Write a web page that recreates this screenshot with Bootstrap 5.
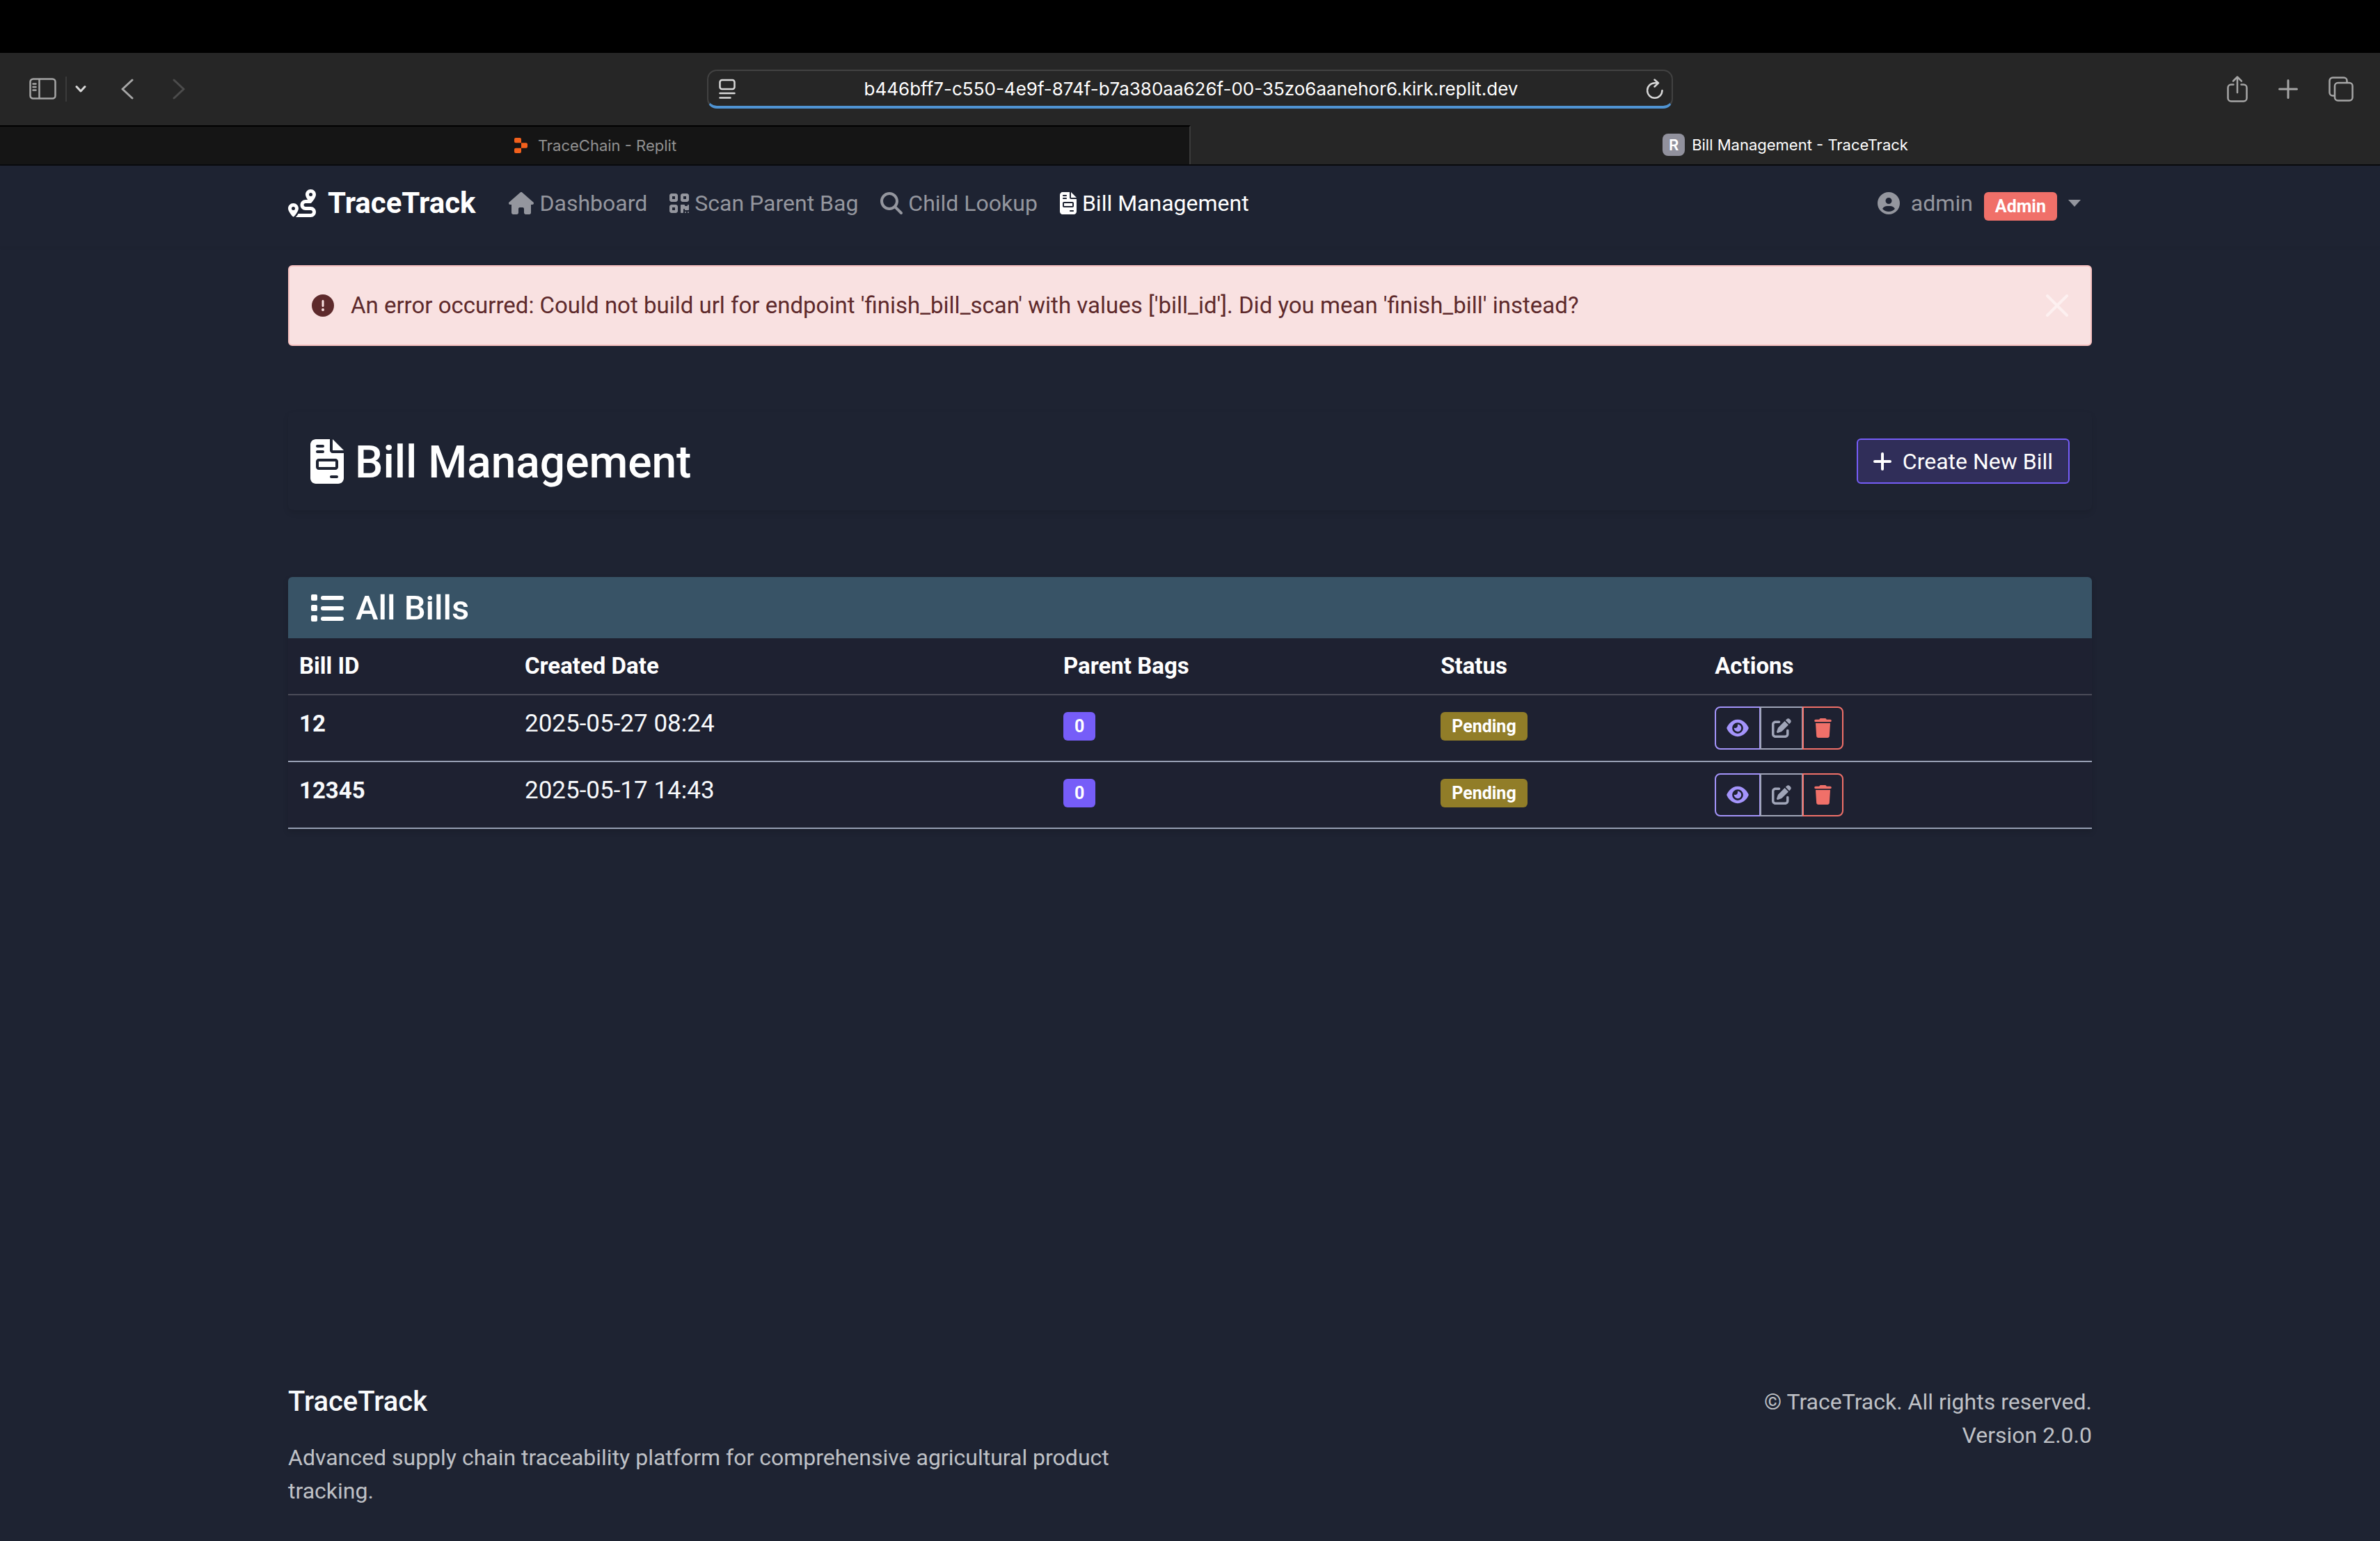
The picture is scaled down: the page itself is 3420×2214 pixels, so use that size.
<!DOCTYPE html>
<html lang="en" data-bs-theme="dark">
<head>
<meta charset="utf-8">
<meta name="viewport" content="width=device-width, initial-scale=1">
<title>Bill Management - TraceTrack</title>
<link href="https://cdn.jsdelivr.net/npm/bootstrap@5.3.0/dist/css/bootstrap.min.css" rel="stylesheet">
<style>
  body {
    font-family: Roboto, "Liberation Sans", sans-serif;
    font-size: 32px;
    line-height: 48px;
    color: #f8fafc;
    background: #1e2332;
  }
  svg { display: block; flex: none; }
  .fa { fill: currentColor; }
  .ln { fill: none; stroke: currentColor; stroke-linecap: round; stroke-linejoin: round; }
  h1, h2, h3, p { margin: 0; }

  /* Browser window */
  .chrome { font-family: Inter, "Liberation Sans", sans-serif; }
  .top-strip { height: 76px; background: #000; }
  .tool-row {
    display: grid;
    grid-template-columns: minmax(0, 1fr) minmax(0, 1388px) minmax(0, 1fr);
    align-items: center;
    height: 104px;
    background: #262626;
    color: #a6a6a6;
  }
  .tool-row button { background: none; border: 0; padding: 0; color: inherit; }
  .tool-left { padding-left: 42px; }
  .tool-right { padding-right: 38px; gap: 44px; }
  .tool-sep { width: 2px; height: 36px; background: #3a3a3a; margin: 0 12px; }
  .addr {
    height: 56px;
    border: 2px solid #424242;
    border-bottom: 4px solid #4f93d2;
    border-radius: 14px;
    padding: 2px 12px 0 15px;
    color: #d8d8d8;
  }
  .addr input {
    background: none;
    border: 0;
    outline: 0;
    padding: 0;
    color: #fff;
    font-size: 26px;
    line-height: 40px;
    text-align: center;
  }
  .tab-row { height: 58px; border-bottom: 2px solid #090a0d; background: #262626; }
  .tab-row a {
    flex: 1 1 0;
    font-size: 22px;
    line-height: 32px;
    color: #fff;
    gap: 10px;
  }
  .tab-row a.tab-idle {
    background: #151515;
    color: #929292;
    border-top: 2px solid #000;
    border-right: 2px solid #3b3b3b;
    gap: 14px;
  }
  .fav { width: 32px; height: 32px; border-radius: 8px; background: #91919d; font-weight: 600; }

  /* Page */
  .page-wrap { max-width: 2640px; padding: 0 24px; }
  .main-nav { height: 116px; padding: 0 0 8px; box-shadow: 0 2px 4px rgba(0, 0, 0, .05); }
  .main-nav .navbar-brand { font-size: 42px; font-weight: 700; line-height: 60px; gap: 17px; margin: 0 32px 0 0; padding: 0; color: #fff; }
  .main-nav .nav-link { gap: 8px; padding: 0 16px; font-size: 32px; line-height: 48px; color: #94969e; }
  .main-nav .nav-link.active { color: #fff; }
  .main-nav .user-link { gap: 16px; }
  .main-nav .user-link .tag { margin-top: 8px; }
  .main-nav .dropdown-toggle::after { display: none; }
  .tag { font-size: 25px; font-weight: 700; line-height: 25px; padding: 8px 16px; border-radius: 6px; color: #fff; }
  .tag-red { background: #f07069; }
  .tag-violet { background: #765df8; }
  .tag-olive { background: #917d28; }

  .note {
    margin: 27px 0 0;
    height: 116px;
    padding: 0 32px;
    border: 2px solid #f6c0bf;
    border-radius: 6px;
    background: #f9e1e1;
    color: #5e2a2c;
    font-size: 33px;
  }
  .note .ln { color: #fdf0f0; }
  .note button { background: none; border: 0; padding: 0; }

  .head-box { margin-top: 95px; height: 141px; padding: 0 32px; border-radius: 8px; box-shadow: 0 4px 8px rgba(0, 0, 0, .1); }
  .head-box h1 { font-size: 64px; font-weight: 500; line-height: 76px; gap: 16px; }
  .head-box h1 span { padding-top: 4px; }
  .btn-new {
    height: 65px;
    padding: 0 22px;
    gap: 16px;
    border: 2px solid #765df8;
    border-radius: 6px;
    background: #302e59;
    color: #fff;
    font-size: 32px;
    line-height: 48px;
  }

  .bill-box { margin-top: 96px; border-radius: 6px 6px 0 0; overflow: hidden; box-shadow: 0 4px 8px rgba(0, 0, 0, .15); }
  .bill-head { height: 88px; padding: 0 33px; background: #385366; }
  .bill-head h2 { font-size: 49px; font-weight: 500; line-height: 58px; gap: 17px; padding-top: 2px; }
  .bills { table-layout: fixed; margin: 0; color: #f8fafc; --bs-table-bg: #1e2131; }
  .bills > :not(caption) > * > * { padding: 16px; border-bottom: 2px solid #979fb3; vertical-align: top; line-height: 48px; }
  .bills > thead > tr > th { font-size: 33px; font-weight: 700; border-color: #4b4c59; color: #fff; }
  .bills > tbody > tr > td { font-size: 35px; height: 96px; padding: 17px 16px 0; }
  .bills > tbody > tr > td strong { font-size: 33px; }
  .bills > tbody > tr > td.cell-tag { padding-top: 24px; line-height: 41px; }
  .bills > tbody > tr > td.cell-acts { padding-top: 16px; line-height: 0; }
  .bills .tag { display: block; width: max-content; }
  .acts .btn { height: 62px; padding: 0 15px; border: 2px solid; border-radius: 8px; display: flex; align-items: center; }
  .acts .btn + .btn { margin-left: -1px; }
  .c-violet, .c-violet:hover { color: #a494fb; }
  .c-slate, .c-slate:hover { color: #a0a5b8; }
  .c-red, .c-red:hover { color: #f07069; }

  .foot { padding-bottom: 48px; color: #bfc1c6; }
  .foot h3 { font-size: 40px; font-weight: 500; line-height: 48px; margin-bottom: 32px; color: #f8fafc; }
</style>
</head>
<body class="d-flex flex-column min-vh-100">

<svg width="0" height="0" class="position-absolute" aria-hidden="true">
  <symbol id="i-file" viewBox="0 0 384 512"><path d="M64 0C28.700 0 0 28.700 0 64L0 448c0 35.300 28.700 64 64 64l256 0c35.300 0 64-28.700 64-64l0-288-128 0c-17.700 0-32-14.300-32-32L224 0 64 0zM256 0l0 128 128 0L256 0zM80 64l64 0c8.800 0 16 7.200 16 16s-7.200 16-16 16L80 96c-8.800 0-16-7.200-16-16s7.200-16 16-16zm0 64l64 0c8.800 0 16 7.200 16 16s-7.200 16-16 16l-64 0c-8.800 0-16-7.200-16-16s7.200-16 16-16zm16 96l192 0c17.700 0 32 14.300 32 32l0 64c0 17.700-14.300 32-32 32L96 352c-17.700 0-32-14.300-32-32l0-64c0-17.700 14.300-32 32-32zm0 32l0 64 192 0 0-64L96 256zM240 416l64 0c8.800 0 16 7.200 16 16s-7.200 16-16 16l-64 0c-8.800 0-16-7.200-16-16s7.200-16 16-16z"/></symbol>
  <symbol id="i-eye" viewBox="0 0 576 512"><path d="M288 32c-80.800 0-145.500 36.800-192.600 80.600C48.600 156 17.300 208 2.500 243.700c-3.300 7.900-3.300 16.700 0 24.600C17.300 304 48.600 356 95.400 399.400C142.500 443.200 207.200 480 288 480s145.500-36.800 192.600-80.600c46.800-43.500 78.100-95.400 93-131.100c3.300-7.900 3.300-16.700 0-24.600c-14.900-35.700-46.200-87.700-93-131.100C433.500 68.800 368.800 32 288 32zM144 256a144 144 0 1 1 288 0 144 144 0 1 1 -288 0zm144-64c0 35.300-28.700 64-64 64c-7.100 0-13.900-1.200-20.300-3.300c-5.500-1.800-11.900 1.600-11.700 7.400c.3 6.900 1.300 13.800 3.200 20.700c13.700 51.200 66.400 81.600 117.600 67.900s81.600-66.400 67.900-117.600c-11.100-41.500-47.800-69.400-88.600-71.100c-5.800-.2-9.200 6.100-7.400 11.700c2.100 6.400 3.300 13.200 3.300 20.300z"/></symbol>
  <symbol id="i-edit" viewBox="0 0 512 512"><path d="M471.600 21.700c-21.900-21.900-57.300-21.900-79.200 0L362.300 51.700l97.900 97.900 30.100-30.100c21.900-21.900 21.900-57.300 0-79.200L471.600 21.700zm-299.200 220c-6.100 6.100-10.800 13.600-13.500 21.900l-29.600 88.800c-2.900 8.600-.6 18.100 5.800 24.600s15.900 8.700 24.600 5.800l88.800-29.600c8.200-2.700 15.700-7.400 21.900-13.500L437.700 172.300 339.700 74.300 172.400 241.700zM96 64C43 64 0 107 0 160L0 416c0 53 43 96 96 96l256 0c53 0 96-43 96-96l0-96c0-17.700-14.300-32-32-32s-32 14.300-32 32l0 96c0 17.700-14.300 32-32 32L96 448c-17.700 0-32-14.300-32-32l0-256c0-17.700 14.300-32 32-32l96 0c17.700 0 32-14.300 32-32s-14.300-32-32-32L96 64z"/></symbol>
  <symbol id="i-trash" viewBox="0 0 448 512"><path d="M135.200 17.700L128 32 32 32C14.300 32 0 46.300 0 64S14.300 96 32 96l384 0c17.700 0 32-14.300 32-32s-14.300-32-32-32l-96 0-7.200-14.300C307.400 6.800 296.300 0 284.200 0L163.800 0c-12.100 0-23.200 6.800-28.600 17.700zM416 128L32 128 53.200 467c1.600 25.300 22.600 45 47.900 45l245.800 0c25.300 0 46.300-19.700 47.900-45L416 128z"/></symbol>
</svg>

<div class="chrome">
  <div class="top-strip"></div>
  <div class="tool-row">
    <div class="tool-left d-flex align-items-center">
      <button type="button" aria-label="Show sidebar"><svg class="ln" width="40" height="32" viewBox="0 0 40 32" stroke-width="2.500"><rect x="1.500" y="1.500" width="36" height="28" rx="4"/><path d="M14.500 2v27M5.500 8.500h4M5.500 13h4M5.500 17.500h4"/></svg></button>
      <span class="tool-sep"></span>
      <button type="button" aria-label="Tab groups"><svg class="ln" width="16" height="12" viewBox="0 0 16 12" stroke-width="3"><path d="M2 2.500l6 6.500 6-6.500" stroke="#d8d8d8"/></svg></button>
      <button type="button" class="ms-5" aria-label="Back"><svg class="ln" width="20" height="32" viewBox="0 0 20 32" stroke-width="3"><path d="M18 3L4 16l14 13"/></svg></button>
      <button type="button" class="ms-5" aria-label="Forward" disabled><svg class="ln ms-2" width="20" height="32" viewBox="0 0 20 32" stroke-width="3"><path d="M2 3l14 13L2 29" stroke="#4c4c4c"/></svg></button>
    </div>
    <div class="addr d-flex align-items-center">
      <svg class="ln" width="24" height="30" viewBox="0 0 24 30" stroke-width="2.500"><rect x="1.500" y="2" width="21" height="13" rx="3"/><path d="M1.500 21h21M1.500 27.500h15"/></svg>
      <input type="text" class="flex-grow-1" aria-label="Address" value="b446bff7-c550-4e9f-874f-b7a380aa626f-00-35zo6aanehor6.kirk.replit.dev">
      <button type="button" aria-label="Reload"><svg class="ln" width="24" height="30" viewBox="0 0 24 30" stroke-width="2.500"><path d="M22.500 17a10.700 10.700 0 1 1-10.700-10.700h5M11.500 1.500l5.500 4.800-5.500 5.200"/></svg></button>
    </div>
    <div class="tool-right d-flex align-items-center justify-content-end">
      <button type="button" aria-label="Share"><svg class="ln" width="30" height="40" viewBox="0 0 30 40" stroke-width="2.500"><path d="M9.500 13.500H6a4.500 4.500 0 0 0-4.500 4.500v15A4.500 4.500 0 0 0 6 37.500h18a4.500 4.500 0 0 0 4.500-4.500V18a4.500 4.500 0 0 0-4.500-4.500h-3.500M15 25V2.500M9 8.500l6-6 6 6"/></svg></button>
      <button type="button" aria-label="New tab"><svg class="ln" width="28" height="28" viewBox="0 0 28 28" stroke-width="3"><path d="M14 1.500v25M1.500 14h25"/></svg></button>
      <button type="button" aria-label="Tab overview"><svg class="ln" width="36" height="36" viewBox="0 0 36 36" stroke-width="2.500"><path d="M8 27.500H6A4.500 4.500 0 0 1 1.500 23V6A4.500 4.500 0 0 1 6 1.500h16A4.500 4.500 0 0 1 26.500 6v2"/><rect x="9" y="9" width="25.500" height="25.500" rx="4.500"/></svg></button>
    </div>
  </div>
  <nav class="tab-row d-flex" aria-label="Tabs">
    <a href="#" class="tab-idle d-flex align-items-center justify-content-center text-decoration-none">
      <svg width="22" height="22" viewBox="0 0 22 22" fill="#f2601c"><path d="M2 2a2 2 0 0 1 2-2h6a2 2 0 0 1 2 2v5.300H4a2 2 0 0 1-2-2zM12 7.300h7a2 2 0 0 1 2 2v3.400a2 2 0 0 1-2 2h-7zM2 16.700a2 2 0 0 1 2-2h8V20a2 2 0 0 1-2 2H4a2 2 0 0 1-2-2z"/></svg>
      <span>TraceChain - Replit</span>
    </a>
    <a href="#" class="d-flex align-items-center justify-content-center text-decoration-none" aria-current="page">
      <span class="fav d-flex align-items-center justify-content-center">R</span>
      <span>Bill Management - TraceTrack</span>
    </a>
  </nav>
</div>

<header>
  <nav class="main-nav navbar">
    <div class="page-wrap container-fluid d-flex flex-nowrap justify-content-start">
      <a href="#" class="navbar-brand d-flex align-items-center">
        <svg class="fa" width="40" height="40" viewBox="0 0 512 512"><path d="M512 96c0 50.200-59.100 125.100-84.600 155c-3.800 4.400-9.400 6.100-14.500 5L320 256c-17.700 0-32 14.300-32 32s14.300 32 32 32l96 0c53 0 96 43 96 96s-43 96-96 96l-276.400 0c8.700-9.900 19.300-22.600 30-36.800c6.300-8.400 12.800-17.600 19-27.200L416 448c17.700 0 32-14.300 32-32s-14.300-32-32-32l-96 0c-53 0-96-43-96-96s43-96 96-96l39.800 0c-21-31.500-39.800-67.700-39.800-96c0-53 43-96 96-96s96 43 96 96zM117.100 489.100c-3.800 4.300-7.200 8.100-10.100 11.300l-1.800 2-.2-.2c-6 4.600-14.600 4-20-1.800C59.800 473 0 402.500 0 352c0-53 43-96 96-96s96 43 96 96c0 30-21.100 67-43.500 97.900c-10.700 14.700-21.700 28-30.800 38.500l-.6 .7zM128 352a32 32 0 1 0 -64 0 32 32 0 1 0 64 0zM416 128a32 32 0 1 0 0-64 32 32 0 1 0 0 64z"/></svg>
        <span>TraceTrack</span>
      </a>
      <div class="navbar-nav flex-row flex-grow-1">
        <a href="#" class="nav-link d-flex align-items-center">
          <svg class="fa" width="36" height="32" viewBox="0 0 576 512"><path d="M575.800 255.500c0 18-15 32.100-32 32.100l-32 0 .7 160.200c0 2.700-.2 5.400-.5 8.100l0 16.200c0 22.100-17.900 40-40 40l-16 0c-1.100 0-2.200 0-3.300-.1c-1.400 .1-2.800 .1-4.200 .1L416 512l-24 0c-22.100 0-40-17.900-40-40l0-24 0-64c0-17.700-14.300-32-32-32l-64 0c-17.700 0-32 14.300-32 32l0 64 0 24c0 22.100-17.900 40-40 40l-24 0-31.900 0c-1.500 0-3-.1-4.500-.2c-1.200 .1-2.400 .2-3.600 .2l-16 0c-22.100 0-40-17.900-40-40l0-112c0-.9 0-1.900 .1-2.800l0-69.700-32 0c-18 0-32-14-32-32.100c0-9 3-17 10-24L266.400 8c7-7 15-8 22-8s15 2 21 7L564.800 231.500c8 7 12 15 11 24z"/></svg>
          <span>Dashboard</span>
        </a>
        <a href="#" class="nav-link d-flex align-items-center">
          <svg class="fa" width="28" height="32" viewBox="0 0 448 512"><path d="M0 80C0 53.500 21.500 32 48 32l96 0c26.500 0 48 21.500 48 48l0 96c0 26.500-21.500 48-48 48l-96 0c-26.500 0-48-21.500-48-48L0 80zM64 96l0 64 64 0 0-64L64 96zM0 336c0-26.500 21.500-48 48-48l96 0c26.500 0 48 21.500 48 48l0 96c0 26.500-21.500 48-48 48l-96 0c-26.500 0-48-21.500-48-48l0-96zm64 16l0 64 64 0 0-64-64 0zM304 32l96 0c26.500 0 48 21.500 48 48l0 96c0 26.500-21.500 48-48 48l-96 0c-26.500 0-48-21.500-48-48l0-96c0-26.500 21.500-48 48-48zm80 64l-64 0 0 64 64 0 0-64zM256 304c0-8.800 7.200-16 16-16l64 0c8.800 0 16 7.200 16 16s7.200 16 16 16l32 0c8.800 0 16-7.200 16-16s7.200-16 16-16s16 7.200 16 16l0 96c0 8.800-7.200 16-16 16l-64 0c-8.800 0-16-7.200-16-16s-7.200-16-16-16s-16 7.200-16 16l0 64c0 8.800-7.200 16-16 16l-32 0c-8.800 0-16-7.200-16-16l0-160zM368 480a16 16 0 1 1 0-32 16 16 0 1 1 0 32zm64 0a16 16 0 1 1 0-32 16 16 0 1 1 0 32z"/></svg>
          <span>Scan Parent Bag</span>
        </a>
        <a href="#" class="nav-link d-flex align-items-center">
          <svg class="fa" width="32" height="32" viewBox="0 0 512 512"><path d="M416 208c0 45.900-14.900 88.300-40 122.700L502.600 457.400c12.500 12.500 12.500 32.800 0 45.300s-32.800 12.500-45.300 0L330.700 376c-34.400 25.200-76.800 40-122.700 40C93.100 416 0 322.900 0 208S93.100 0 208 0S416 93.100 416 208zM208 352a144 144 0 1 0 0-288 144 144 0 1 0 0 288z"/></svg>
          <span>Child Lookup</span>
        </a>
        <a href="#" class="nav-link active d-flex align-items-center" aria-current="page">
          <svg class="fa" width="24" height="32"><use href="#i-file"/></svg>
          <span>Bill Management</span>
        </a>
      </div>
      <a href="#" class="nav-link user-link dropdown-toggle d-flex align-items-center" role="button">
        <svg class="fa" width="32" height="32" viewBox="0 0 512 512"><path d="M399 384.200C376.900 345.800 335.400 320 288 320l-64 0c-47.400 0-88.900 25.800-111 64.200c35.200 39.200 86.200 63.800 143 63.800s107.800-24.700 143-63.800zM0 256a256 256 0 1 1 512 0A256 256 0 1 1 0 256zm256 16a72 72 0 1 0 0-144 72 72 0 1 0 0 144z"/></svg>
        <span>admin</span>
        <span class="tag tag-red">Admin</span>
        <svg class="fa" width="18" height="10" viewBox="0 0 18 10"><path d="M0 0h18L9 10z"/></svg>
      </a>
    </div>
  </nav>
</header>

<main class="page-wrap container-fluid">
  <div class="note alert d-flex align-items-center" role="alert">
    <svg class="fa" width="32" height="32" viewBox="0 0 512 512"><path d="M256 512A256 256 0 1 0 256 0a256 256 0 1 0 0 512zm0-384c13.300 0 24 10.700 24 24l0 112c0 13.300-10.700 24-24 24s-24-10.700-24-24l0-112c0-13.300 10.700-24 24-24zM224 352a32 32 0 1 1 64 0 32 32 0 1 1 -64 0z"/></svg>
    <span class="flex-grow-1 ms-4">An error occurred: Could not build url for endpoint 'finish_bill_scan' with values ['bill_id']. Did you mean 'finish_bill' instead?</span>
    <button type="button" aria-label="Close"><svg class="ln" width="32" height="32" viewBox="0 0 32 32" stroke-width="4"><path d="M2 2l28 28M30 2L2 30"/></svg></button>
  </div>

  <section class="head-box d-flex align-items-center justify-content-between">
    <h1 class="d-flex align-items-center"><svg class="fa" width="48" height="64"><use href="#i-file"/></svg><span>Bill Management</span></h1>
    <button type="button" class="btn btn-new d-flex align-items-center">
      <svg class="ln" width="26" height="26" viewBox="0 0 26 26" stroke-width="4"><path d="M13 2v22M2 13h22"/></svg>
      <span>Create New Bill</span>
    </button>
  </section>

  <section class="bill-box">
    <div class="bill-head d-flex align-items-center">
      <h2 class="d-flex align-items-center"><svg class="fa" width="47" height="40" viewBox="0 0 47 40"><rect width="9" height="9" rx="2"/><rect y="15" width="9" height="9" rx="2"/><rect y="30" width="9" height="9" rx="2"/><rect x="14" y="2" width="33" height="6" rx="3"/><rect x="14" y="17" width="33" height="6" rx="3"/><rect x="14" y="32" width="33" height="6" rx="3"/></svg><span>All Bills</span></h2>
    </div>
    <table class="bills table">
      <colgroup><col style="width:12.5%"><col style="width:29.86%"><col style="width:20.92%"><col style="width:15.2%"><col></colgroup>
      <thead>
        <tr><th scope="col">Bill ID</th><th scope="col">Created Date</th><th scope="col">Parent Bags</th><th scope="col">Status</th><th scope="col">Actions</th></tr>
      </thead>
      <tbody>
        <tr>
          <td><strong>12</strong></td>
          <td>2025-05-27 08:24</td>
          <td class="cell-tag"><span class="tag tag-violet">0</span></td>
          <td class="cell-tag"><span class="tag tag-olive">Pending</span></td>
          <td class="cell-acts">
            <div class="acts btn-group">
              <button type="button" class="btn c-violet" aria-label="View bill 12"><svg class="fa" width="32" height="28"><use href="#i-eye"/></svg></button>
              <button type="button" class="btn c-slate" aria-label="Edit bill 12"><svg class="fa" width="28" height="28"><use href="#i-edit"/></svg></button>
              <button type="button" class="btn c-red" aria-label="Delete bill 12"><svg class="fa" width="25" height="28"><use href="#i-trash"/></svg></button>
            </div>
          </td>
        </tr>
        <tr>
          <td><strong>12345</strong></td>
          <td>2025-05-17 14:43</td>
          <td class="cell-tag"><span class="tag tag-violet">0</span></td>
          <td class="cell-tag"><span class="tag tag-olive">Pending</span></td>
          <td class="cell-acts">
            <div class="acts btn-group">
              <button type="button" class="btn c-violet" aria-label="View bill 12345"><svg class="fa" width="32" height="28"><use href="#i-eye"/></svg></button>
              <button type="button" class="btn c-slate" aria-label="Edit bill 12345"><svg class="fa" width="28" height="28"><use href="#i-edit"/></svg></button>
              <button type="button" class="btn c-red" aria-label="Delete bill 12345"><svg class="fa" width="25" height="28"><use href="#i-trash"/></svg></button>
            </div>
          </td>
        </tr>
      </tbody>
    </table>
  </section>
</main>

<footer class="foot page-wrap container-fluid mt-auto">
  <div class="row">
    <div class="col-6">
      <h3>TraceTrack</h3>
      <p>Advanced supply chain traceability platform for comprehensive agricultural product tracking.</p>
    </div>
    <div class="col-6 text-end">
      <p>© TraceTrack. All rights reserved.</p>
      <p>Version 2.0.0</p>
    </div>
  </div>
</footer>

<script src="https://cdn.jsdelivr.net/npm/bootstrap@5.3.0/dist/js/bootstrap.bundle.min.js"></script>
</body>
</html>
